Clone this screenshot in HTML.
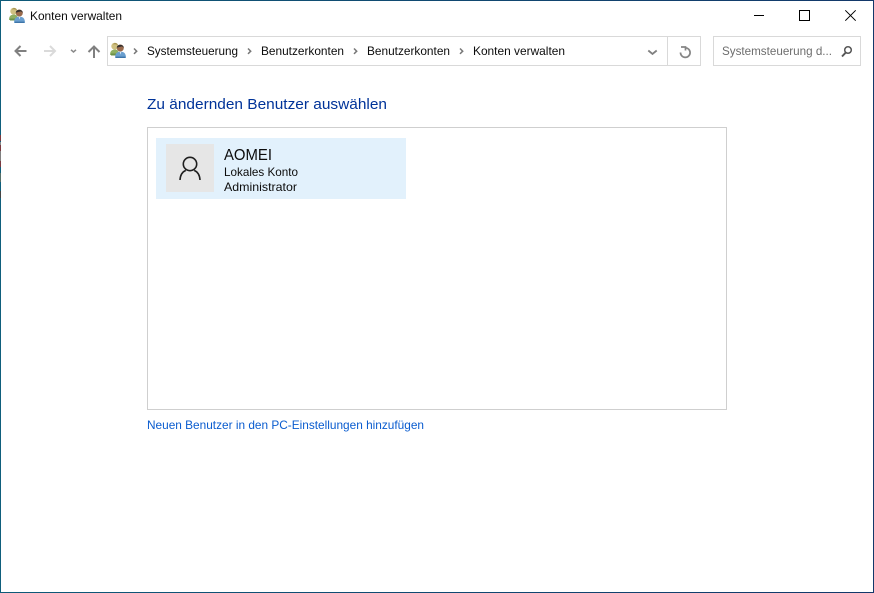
<!DOCTYPE html>
<html><head><meta charset="utf-8"><style>
html,body{margin:0;padding:0;background:#fff;width:874px;height:593px;overflow:hidden}
svg{display:block}
text{font-family:"Liberation Sans",sans-serif;font-size:12px;fill:#0c0c0c}
</style></head><body>
<svg width="874" height="593" viewBox="0 0 874 593" xmlns="http://www.w3.org/2000/svg">
<defs>
<linearGradient id="edge" x1="0" x2="1" y1="0" y2="0">
<stop offset="0" stop-color="#0e5a78"/><stop offset="1" stop-color="#13386a"/>
</linearGradient>
<g id="users">
<circle cx="4.8" cy="4.2" r="3.5" fill="#cfc081"/>
<path d="M3 2.5C4 .5 7 .5 8 3L5 2.2Z" fill="#a59350"/>
<path d="M0 13C0 8.8 2 7.6 4.8 7.6C7.6 7.6 9 8.8 9 13Z" fill="#8fb063"/>
<path d="M1 11.5h6V13.5H1z" fill="#6b9148"/>
<circle cx="10.3" cy="6" r="3.5" fill="#9a6a4c"/>
<path d="M6.8 5.6C7 2 13.6 2 13.9 5.8L12 4.4Z" fill="#33302e"/>
<path d="M5 16C5 11.3 7.2 9.6 10.5 9.6C13.8 9.6 16 11.3 16 16Z" fill="#6a9fcf"/>
<path d="M6 14.6h9.2V16H6z" fill="#3f75a8"/>
<path d="M9.6 9.6h1.8l-.9 3z" fill="#d8e6f2"/>
</g>
</defs>
<rect width="874" height="593" fill="#fff"/>
<rect x="0" y="0" width="874" height="1" fill="url(#edge)"/>
<rect x="0" y="592" width="874" height="1" fill="url(#edge)"/>
<rect x="0" y="0" width="1" height="593" fill="#0f5f7c"/>
<rect x="873" y="0" width="1" height="593" fill="#13386a"/>
<rect x="0" y="135" width="1" height="6" fill="#7a3a40"/>
<rect x="0" y="142" width="1" height="3" fill="#888"/>
<rect x="0" y="145" width="1" height="6" fill="#7a3a40"/>
<rect x="0" y="151" width="1" height="10" fill="#808080"/>
<rect x="0" y="161" width="1" height="6" fill="#7a3a40"/>
<rect x="0" y="173" width="1" height="9" fill="#566f68"/>
<rect x="0" y="191" width="1" height="7" fill="#444"/>

<use href="#users" x="9" y="7"/>
<text x="30" y="20" textLength="92" lengthAdjust="spacingAndGlyphs">Konten verwalten</text>

<path d="M754 15.5h10" stroke="#000" fill="none"/>
<rect x="799.5" y="10.5" width="10" height="10" fill="none" stroke="#000"/>
<path d="M845.3 10.3l10.4 10.4M855.7 10.3L845.3 20.7" stroke="#000" fill="none"/>

<path d="M26.5 51H15.5M20.5 46L15.5 51l5 5" stroke="#808080" stroke-width="2" fill="none"/>
<path d="M44 51H55M50 46L55 51l-5 5" stroke="#dadada" stroke-width="2" fill="none"/>
<path d="M71 49.8l2.5 2.2 2.5-2.2" stroke="#8a8a8a" stroke-width="1.5" fill="none"/>
<path d="M94 58V47M88.5 52l5.5-5.5 5.5 5.5" stroke="#808080" stroke-width="2" fill="none"/>

<rect x="107.5" y="36.5" width="593" height="29" fill="#fff" stroke="#d9d9d9"/>
<path d="M667.5 37v28" stroke="#d9d9d9"/>
<use href="#users" x="110" y="42"/>
<path d="M134 48.5l2.7 2.7-2.7 2.7" stroke="#777" stroke-width="1.5" fill="none"/>
<text x="147" y="55" textLength="91" lengthAdjust="spacingAndGlyphs">Systemsteuerung</text>
<path d="M248 48.5l2.7 2.7-2.7 2.7" stroke="#777" stroke-width="1.5" fill="none"/>
<text x="261" y="55" textLength="83" lengthAdjust="spacingAndGlyphs">Benutzerkonten</text>
<path d="M354 48.5l2.7 2.7-2.7 2.7" stroke="#777" stroke-width="1.5" fill="none"/>
<text x="367" y="55" textLength="83" lengthAdjust="spacingAndGlyphs">Benutzerkonten</text>
<path d="M460 48.5l2.7 2.7-2.7 2.7" stroke="#777" stroke-width="1.5" fill="none"/>
<text x="473" y="55" textLength="92" lengthAdjust="spacingAndGlyphs">Konten verwalten</text>
<path d="M648.3 50.5l4.2 3.5 4.2-3.5" stroke="#808080" stroke-width="1.8" fill="none"/>
<path d="M685.3 47.8A4.8 4.8 0 1 1 680.5 52.5M681 47h4.5v3.5" stroke="#858585" stroke-width="1.7" fill="none"/>

<rect x="713.5" y="36.5" width="147" height="29" fill="#fff" stroke="#d9d9d9"/>
<text x="722" y="55" textLength="110" lengthAdjust="spacingAndGlyphs" style="fill:#6d6d6d">Systemsteuerung d...</text>
<circle cx="848" cy="50" r="3.3" fill="none" stroke="#555" stroke-width="1.5"/>
<path d="M845.5 52.8l-3.5 3.7" stroke="#555" stroke-width="1.9" fill="none"/>

<text x="147" y="109" textLength="240" lengthAdjust="spacingAndGlyphs" style="font-size:15px;fill:#003399">Zu ändernden Benutzer auswählen</text>

<rect x="147.5" y="127.5" width="579" height="282" fill="#fff" stroke="#cfcfcf"/>
<rect x="156" y="138" width="250" height="61" fill="#e2f1fc"/>
<rect x="166" y="144" width="48" height="48" fill="#e6e6e6"/>
<circle cx="190" cy="164" r="6.7" fill="none" stroke="#1f1f1f" stroke-width="1.6"/>
<path d="M180 180C180.3 175.3 182 172 185.8 170.4M194.2 170.4C198 172 199.7 175.3 200 180" fill="none" stroke="#1f1f1f" stroke-width="1.6"/>
<text x="224" y="160" textLength="48" lengthAdjust="spacingAndGlyphs" style="font-size:16px">AOMEI</text>
<text x="224" y="176" textLength="74" lengthAdjust="spacingAndGlyphs">Lokales Konto</text>
<text x="224" y="191" textLength="73" lengthAdjust="spacingAndGlyphs">Administrator</text>

<text x="147" y="429" textLength="277" lengthAdjust="spacingAndGlyphs" style="fill:#0a5ccf">Neuen Benutzer in den PC-Einstellungen hinzufügen</text>
</svg>
</body></html>
